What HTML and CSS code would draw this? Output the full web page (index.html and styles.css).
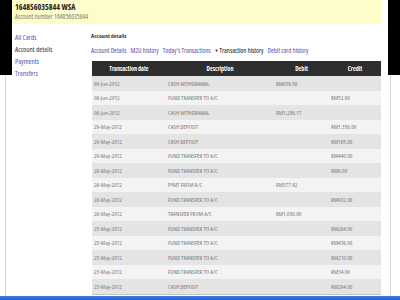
FILE: index.html
```html
<!DOCTYPE html>
<html>
<head>
  <meta charset="UTF-8">
  <title>Account details</title>
  <link rel="stylesheet" href="styles.css">
</head>
<body>
  <div class="screen">
    <div class="gutter gutter-left">
      <div class="shade"></div>
      <div class="edge"></div>
    </div>

    <div class="page">
      <div class="acct-head">
        <h1>164856035844 WSA</h1>
        <p>Account number 164856035844</p>
      </div>

      <div class="page-body">
        <ul class="side-nav">
          <li><a href="#">All Cards</a></li>
          <li class="current">Account details</li>
          <li><a href="#">Payments</a></li>
          <li><a href="#">Transfers</a></li>
        </ul>

        <div class="content">
          <h2>Account details</h2>

          <div class="tabs">
            <a href="#">Account Details</a>
            <a href="#">M2U history</a>
            <a href="#">Today's Transactions</a>
            <span class="tab-active"><span class="caret">&#9660;</span>Transaction history</span>
            <a href="#">Debit card history</a>
          </div>

          <table class="txn">
            <thead>
              <tr>
                <th class="col-date">Transaction date</th>
                <th class="col-desc">Description</th>
                <th class="col-debit">Debit</th>
                <th class="col-credit">Credit</th>
              </tr>
            </thead>
            <tbody>
              <tr><td>09-Jun-2012</td><td>CASH WITHDRAWAL</td><td>RM859.56</td><td></td></tr>
              <tr><td>08-Jun-2012</td><td>FUND TRANSFER TO A/C</td><td></td><td>RM52.00</td></tr>
              <tr><td>06-Jun-2012</td><td>CASH WITHDRAWAL</td><td>RM1,296.17</td><td></td></tr>
              <tr><td>29-May-2012</td><td>CASH DEPOSIT</td><td></td><td>RM1,350.00</td></tr>
              <tr><td>29-May-2012</td><td>CASH DEPOSIT</td><td></td><td>RM165.00</td></tr>
              <tr><td>29-May-2012</td><td>FUND TRANSFER TO A/C</td><td></td><td>RM440.00</td></tr>
              <tr><td>28-May-2012</td><td>FUND TRANSFER TO A/C</td><td></td><td>RM6.00</td></tr>
              <tr><td>28-May-2012</td><td>PYMT FROM A/C</td><td>RM377.92</td><td></td></tr>
              <tr><td>28-May-2012</td><td>FUND TRANSFER TO A/C</td><td></td><td>RM432.00</td></tr>
              <tr><td>28-May-2012</td><td>TRANSFER FROM A/C</td><td>RM1,000.00</td><td></td></tr>
              <tr><td>25-May-2012</td><td>FUND TRANSFER TO A/C</td><td></td><td>RM264.00</td></tr>
              <tr><td>25-May-2012</td><td>FUND TRANSFER TO A/C</td><td></td><td>RM436.00</td></tr>
              <tr><td>25-May-2012</td><td>FUND TRANSFER TO A/C</td><td></td><td>RM210.00</td></tr>
              <tr><td>23-May-2012</td><td>FUND TRANSFER TO A/C</td><td></td><td>RM34.00</td></tr>
              <tr><td>23-May-2012</td><td>CASH DEPOSIT</td><td></td><td>RM294.00</td></tr>
            </tbody>
          </table>
        </div>
      </div>
    </div>

    <div class="gutter gutter-right">
      <div class="shade"></div>
      <div class="edge"></div>
    </div>
  </div>

  <div class="taskbar"></div>
</body>
</html>
```

FILE: styles.css
```css
html,
body {
  margin: 0;
  width: 400px;
  height: 300px;
  overflow: hidden;
  background-color: #ffffff;
}

/* narrow face, the capture is squeezed sideways */
body {
  font-family: "Open Sans", "Liberation Sans", sans-serif;
  font-stretch: 75%;
  color: #333333;
}

.screen {
  display: flex;
  height: 296px;
}

.gutter {
  display: flex;
  flex-direction: column;
  width: 12px;
  flex-shrink: 0;
}

.shade {
  height: 75px;
  background-color: #000000;
}

.edge {
  flex: 1;
  border-left: 1px solid #d6d6d6;
}

.gutter-left .edge {
  margin-left: 5px;
}

.gutter-right .edge {
  margin-left: 2px;
}

.page {
  width: 369px;
  margin-right: 7px;
  flex-shrink: 0;
}

.acct-head {
  height: 24px;
  box-sizing: border-box;
  padding: 2px 0 0 3px;
  background-color: #fdfdca;
}

.acct-head h1 {
  margin: 0;
  font-size: 8px;
  line-height: 10px;
  font-weight: bold;
  color: #222222;
}

.acct-head p {
  margin: 0;
  font-size: 6.7px;
  line-height: 9px;
  color: #7a7a7a;
}

.page-body {
  display: flex;
}

.side-nav {
  width: 79px;
  flex-shrink: 0;
  box-sizing: border-box;
  margin: 0;
  padding: 7px 0 0 3px;
  list-style: none;
  font-size: 7.2px;
  line-height: 12px;
}

.side-nav a {
  color: #5555b5;
  text-decoration: none;
}

.side-nav .current {
  color: #333333;
}

.content {
  flex: 1;
  padding-top: 7px;
}

.content h2 {
  margin: 0;
  font-size: 6px;
  line-height: 10px;
  font-weight: bold;
  color: #333333;
}

.tabs {
  display: flex;
  gap: 4px;
  margin-top: 5px;
  font-size: 6.75px;
  line-height: 10px;
  white-space: nowrap;
}

.tabs a {
  color: #4f4fb0;
  text-decoration: none;
}

.tab-active {
  color: #111111;
}

.caret {
  font-size: 4px;
  margin-right: 1px;
  vertical-align: 1px;
}

.txn {
  width: 289px;
  margin-top: 5px;
  margin-left: 1px;
  border-collapse: collapse;
  table-layout: fixed;
  border-bottom: 1px solid #c4c4c4;
  font-size: 6.1px;
}

.txn thead tr {
  background-color: #2e2e2e;
}

.txn th {
  height: 15px;
  padding: 0;
  color: #ffffff;
  font-weight: bold;
  text-align: center;
}

.col-date {
  width: 74px;
}

.col-desc {
  width: 108px;
}

.col-debit {
  width: 55px;
}

.col-credit {
  width: 52px;
}

.txn td {
  height: 14.5px;
  padding: 0 0 0 2px;
  color: #7a7a7a;
  white-space: nowrap;
}

.txn tbody tr:nth-child(odd) {
  background-color: #e4e4e4;
}

.txn tbody tr:nth-child(even) {
  background-color: #f3f3f3;
}

.taskbar {
  height: 4px;
  background: linear-gradient(#3d7fe0, #245fd0);
}
```
